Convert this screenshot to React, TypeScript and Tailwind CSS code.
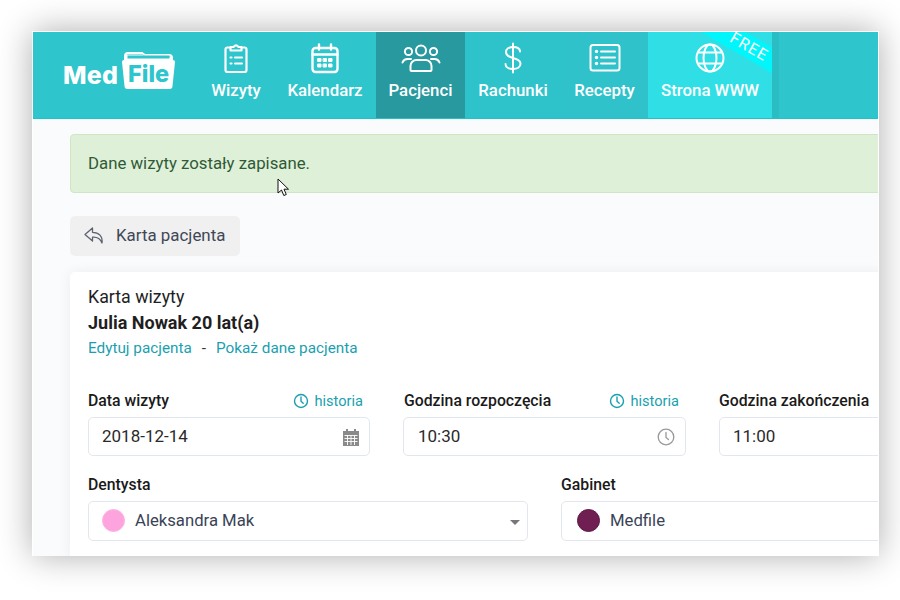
import React from "react";

const S = ({ children, w = 32, h = 32, sw = 2 }: { children: React.ReactNode; w?: number; h?: number; sw?: number }) => (
  <svg width={w} height={h} viewBox={`0 0 ${w} ${h}`} fill="none" stroke="currentColor" strokeWidth={sw} strokeLinecap="round" strokeLinejoin="round">
    {children}
  </svg>
);

const ClipIcon = () => (
  <S sw={2.2}>
    <path d="M10.500 5.500H7.500a2 2 0 0 0-2 2v20.500a2 2 0 0 0 2 2h17a2 2 0 0 0 2-2V7.500a2 2 0 0 0-2-2h-3" />
    <path d="M10.500 5h3.200a2.400 2.400 0 0 1 4.600 0h3.200v3.500h-11z" />
    <path d="M10.500 15.500h1M15 15.500h7M10.500 21.500h1M15 21.500h7" />
  </S>
);
const CalIcon = () => (
  <S sw={2.4}>
    <rect x="3.500" y="6" width="25" height="24" rx="3" />
    <path d="M3.500 12.500h25M10 2.500v5M22 2.500v5" />
    <path d="M9 16.500h3v3H9zM14.500 16.500h3v3h-3zM20 16.500h3v3h-3zM9 22h3v3H9zM14.500 22h3v3h-3zM20 22h3v3h-3z" fill="currentColor" strokeWidth="1" />
  </S>
);
const UsersIcon = () => (
  <S w={40} h={30}>
    <circle cx="20" cy="7.500" r="5" />
    <circle cx="7.500" cy="8.500" r="3.600" />
    <circle cx="32.500" cy="8.500" r="3.600" />
    <path d="M9.500 27v-4a6 6 0 0 1 6-6h9a6 6 0 0 1 6 6v4a1 1 0 0 1-1 1H10.500a1 1 0 0 1-1-1z" />
    <path d="M1.500 19.500a5.500 5.500 0 0 1 5-3.500h3.500M38.500 19.500a5.500 5.500 0 0 0-5-3.500H30" />
  </S>
);
const DollarIcon = () => (
  <S w={20} h={32}>
    <path d="M10 1.500v29" />
    <path d="M17 9.500c0-3-3-4.500-7-4.500s-7 2-7 5.300 3 4.700 7 5.700 7.500 2.400 7.500 5.800-3.500 5.200-7.500 5.200-7.500-1.800-7.500-5" />
  </S>
);
const ListIcon = () => (
  <svg width="32" height="30" viewBox="0 0 32 30" fill="none" stroke="currentColor" strokeWidth="2" strokeLinecap="round">
    <rect x="1.500" y="2" width="29" height="25.500" rx="2.500" />
    <circle cx="7.500" cy="8.500" r="1.700" fill="currentColor" stroke="none" />
    <circle cx="7.500" cy="14.500" r="1.700" fill="currentColor" stroke="none" />
    <circle cx="7.500" cy="20.500" r="1.700" fill="currentColor" stroke="none" />
    <path d="M12 8.500h14M12 14.500h14M12 20.500h14" />
  </svg>
);
const GlobeIcon = () => (
  <S w={30} h={30}>
    <circle cx="15" cy="15" r="13.500" />
    <ellipse cx="15" cy="15" rx="6.500" ry="13.500" />
    <path d="M3 9.500h24M3 20.500h24" />
  </S>
);

const NavItem = ({ w, label, icon, cls = "", children }: { w: string; label: string; icon: React.ReactNode; cls?: string; children?: React.ReactNode }) => (
  <div className={`relative flex flex-col items-center h-[86px] overflow-hidden ${w} ${cls}`}>
    {children}
    <div className="relative h-[31px] mt-[10px] flex items-center justify-center">{icon}</div>
    <div className="mt-[5px] text-[16.8px] leading-[24px] font-medium whitespace-nowrap">{label}</div>
  </div>
);

const Logo = () => (
  <div className="relative w-[165px] h-[86px] shrink-0">
    <span className="absolute left-[30px] top-[28px] text-[25px] leading-[30px] font-extrabold tracking-[0.2px] font-['Inter',sans-serif]">Med</span>
    <svg className="absolute left-[89px] top-[20px]" width="53" height="37" viewBox="0 0 53 37" fill="none">
      <path d="M3 10V4a3 3 0 0 1 3-3h14l3 2h24a3 3 0 0 1 3 3v5" stroke="#fff" strokeWidth="2" />
      <path d="M3 2.500h17l3 2h27v5H3z" fill="#fff" />
      <path d="M5.500 3.500h42v3h-42z" fill="#2ec5cc" />
      <path d="M0 10a2 2 0 0 1 2-2h49a2 2 0 0 1 2 2l-2.500 24a3 3 0 0 1-3 3H5.500a3 3 0 0 1-3-3z" fill="#fff" />
    </svg>
    <span className="absolute left-[95px] top-[29px] text-[23.5px] leading-[26px] font-extrabold text-[#2ec5cc] font-['Inter',sans-serif]">File</span>
  </div>
);

const ClockSmall = ({ className = "" }: { className?: string }) => (
  <svg className={className} width="16" height="16" viewBox="0 0 16 16" fill="none" stroke="currentColor" strokeWidth="1.400" strokeLinecap="round" strokeLinejoin="round">
    <circle cx="8" cy="8" r="6.500" />
    <path d="M8 4v4.300l2.200 2" />
  </svg>
);

const History = () => (
  <div className="flex items-center gap-[5px] text-[14.6px] leading-[20px] text-[#1b9fb0]">
    <ClockSmall className="text-[#1b9fb0]" />
    <span>historia</span>
  </div>
);

const CalGray = () => (
  <svg width="16" height="18" viewBox="0 0 16 18" className="text-[#8a8a8a]">
    <path d="M0 3h3V1h2v2h6V1h2v2h3v15H0z" fill="currentColor" />
    <path d="M1.500 7.500h13M1.500 10.500h13M1.500 13.500h13M4.500 7v10M8 7v10M11.500 7v10" stroke="#fff" strokeWidth=".9" />
  </svg>
);

const ClockGray = () => (
  <svg width="18" height="18" viewBox="0 0 18 18" fill="none" stroke="#999" strokeWidth="1.300" strokeLinecap="round" strokeLinejoin="round">
    <circle cx="9" cy="9" r="7.800" />
    <path d="M9 4.500v5l2.500 2" />
  </svg>
);

const Field = ({ w, lcls = "", vcls, label, value, icon, history }: { w: string; lcls?: string; vcls: string; label: string; value: string; icon?: React.ReactNode; history?: boolean }) => (
  <div className={`shrink-0 ${w}`}>
    <div className={`flex items-center justify-between h-[24px] pr-[7px] ${lcls}`}>
      <span className="text-[15.8px] font-medium text-[#1a1a1a] whitespace-nowrap">{label}</span>
      {history && <History />}
    </div>
    <div className={`mt-[4px] h-[39px] rounded-[5px] border border-[#e2e6ee] pr-[10px] flex items-center justify-between text-[17px] text-[#2a2a2a] ${vcls}`}>
      <span>{value}</span>
      {icon}
    </div>
  </div>
);

const SelectField = ({ label, value, color, border, w, pad, caret }: { label: string; value: string; color: string; border: string; w: string; pad: string; caret?: boolean }) => (
  <div className={`shrink-0 ${w}`}>
    <div className="h-[24px] text-[15.8px] font-medium text-[#1a1a1a] flex items-center">{label}</div>
    <div className={`mt-[4px] h-[40px] rounded-[5px] border border-[#e2e6ee] pr-[7px] flex items-center justify-between ${pad}`}>
      <div className="flex items-center gap-[10px]">
        <span className={`w-[23px] h-[23px] rounded-full border ${color} ${border}`} />
        <span className="text-[16.7px] text-[#3a4356]">{value}</span>
      </div>
      {caret && <span className="w-0 h-0 border-x-[5px] border-x-transparent border-t-[5px] border-t-[#777] mt-[2px]" />}
    </div>
  </div>
);

export default function App() {
  return (
    <div className="w-[900px] h-[600px] bg-white pl-[32px] pt-[31px] overflow-hidden font-['Roboto',sans-serif]">
      <div className="relative w-[847px] h-[525px] border-t border-x border-white bg-[#f9fbfd] overflow-hidden shadow-[0_0_32px_rgba(0,0,0,0.32)]">
        <header className="flex h-[87px] bg-[#2ec5cc] border-b border-[#1fc4cb] text-white">
          <Logo />
          <NavItem w="w-[76px]" label="Wizyty" icon={<ClipIcon />} />
          <NavItem w="w-[102px]" label="Kalendarz" icon={<CalIcon />} />
          <NavItem w="w-[89px]" label="Pacjenci" icon={<UsersIcon />} cls="bg-[#27999f]" />
          <NavItem w="w-[96px]" label="Rachunki" icon={<DollarIcon />} cls="bg-[#2ec3cb]" />
          <NavItem w="w-[87px]" label="Recepty" icon={<ListIcon />} cls="bg-[#2fc2ca]" />
          <NavItem w="w-[124px]" label="Strona WWW" icon={<GlobeIcon />} cls="bg-[#30dfe6]">
            <div className="absolute top-[4px] left-[46px] w-[110px] h-[22px] rotate-[30deg] bg-[#00f6fb] text-center text-[16px] leading-[22px] tracking-[1px] font-normal">FREE</div>
          </NavItem>
          <div className="w-[7px] h-[86px] bg-[#2bbdc4]" />
        </header>

        <main className="pl-[37px]">
          <div className="mt-[15px] w-[900px] h-[59px] rounded-[4px] border border-[#cfe6c4] bg-[#dff0d8] pl-[17px] flex items-center text-[16.8px] text-[#2f5a36]">
            Dane wizyty zostały zapisane.
          </div>

          <div className="mt-[23px] w-[170px] h-[40px] rounded-[5px] bg-[#f0f0f1] flex items-center pl-[14px] gap-[11px] text-[16.9px] text-[#3f4757]">
            <svg width="21" height="18" viewBox="0 0 21 18" fill="none" stroke="#5b6270" strokeWidth="1.300" strokeLinejoin="round">
              <path d="M8.500 1 1 7.500l7.500 6.500v-3.800c4-.3 7.500.8 9.500 5.800.8-7-3-10.500-9.500-10.700z" />
            </svg>
            <span>Karta pacjenta</span>
          </div>

          <section className="mt-[16px] w-[900px] h-[290px] rounded-t-[5px] bg-white pl-[18px] pt-[15px] shadow-[0_0_14px_rgba(0,0,0,0.06)]">
            <div className="text-[17.8px] leading-[20px] text-[#1f1f1f]">Karta wizyty</div>
            <div className="mt-[6px] text-[18px] leading-[20px] font-bold text-[#1f1f1f]">Julia Nowak 20 lat(a)</div>
            <div className="mt-[5px] flex text-[15.3px] leading-[20px] text-[#1b9fb0]">
              <span>Edytuj pacjenta</span>
              <span className="mx-[10px] text-[#333]">-</span>
              <span>Pokaż dane pacjenta</span>
            </div>

            <div className="mt-[31px] flex gap-[33px]">
              <Field w="w-[282px]" vcls="pl-[13px]" label="Data wizyty" value="2018-12-14" history icon={<CalGray />} />
              <Field w="w-[283px]" lcls="pl-px" vcls="pl-[14px]" label="Godzina rozpoczęcia" value="10:30" history icon={<ClockGray />} />
              <Field w="w-[283px]" vcls="pl-[13px]" label="Godzina zakończenia" value="11:00" />
            </div>

            <div className="mt-[17px] flex gap-[33px]">
              <SelectField w="w-[440px]" pad="pl-[13px]" label="Dentysta" value="Aleksandra Mak" color="bg-[#fda4de]" border="border-[#fdb4e2]" caret />
              <SelectField w="w-[440px]" pad="pl-[15px]" label="Gabinet" value="Medfile" color="bg-[#6f1f52]" border="border-[#5f1a46]" />
            </div>
          </section>
        </main>

        <svg className="absolute left-[244px] top-[146px]" width="13" height="19" viewBox="0 0 13 19">
          <path d="M1 1v14l3.500-3 2.300 5.500 2.500-1-2.300-5.300H11.500z" fill="#fff" stroke="#111" strokeWidth="1" strokeLinejoin="round" />
        </svg>
      </div>
    </div>
  );
}
